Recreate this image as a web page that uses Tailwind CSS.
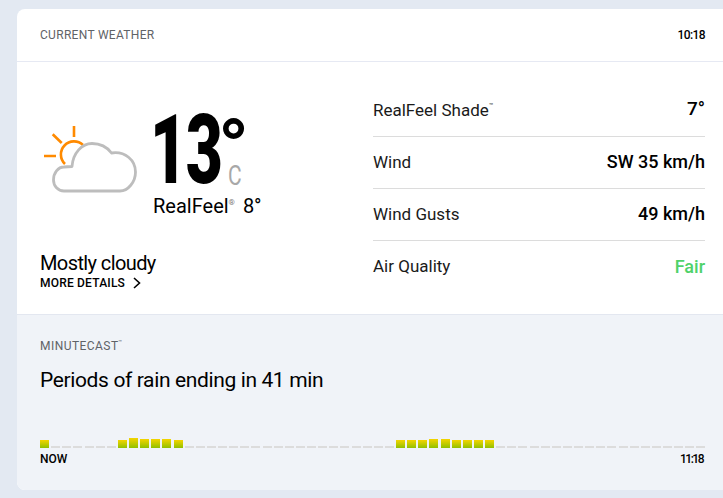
<!DOCTYPE html>
<html lang="en">
<head>
    <meta charset="UTF-8">
    <title>Current Weather</title>
    <script src="https://cdn.jsdelivr.net/npm/@tailwindcss/browser@4"></script>
</head>
<body class="bg-[#e3e9f2] h-[498px] overflow-hidden font-['Roboto',sans-serif] text-black">

    <div class="ml-[17px] mt-[9px] h-[481px] bg-white rounded-tl-lg rounded-bl-lg overflow-hidden flex flex-col">

        <!-- header -->
        <div class="h-[53px] shrink-0 border-b border-[#e6e9f3] pl-[23px] pr-[18px] flex items-center justify-between">
            <span class="text-[12px] tracking-[0.3px] text-[#5f6367]">CURRENT WEATHER</span>
            <span class="text-[12px] font-medium tracking-[-0.6px]">10:18</span>
        </div>

        <!-- current conditions -->
        <div class="h-[252px] shrink-0 pl-[23px] pr-[18px] flex justify-between">
            <div class="w-[260px] flex flex-col">
                <div class="h-[182px] flex">
                    <svg class="w-[100px] h-[76px] mt-[58px] shrink-0" viewBox="0 0 100 76" fill="none">
                        <g stroke="#ff8a00" stroke-width="2.6">
                            <path d="M4 36H16"/>
                            <path d="M34 6V17"/>
                            <path d="M12.7 14.3L21.7 23"/>
                            <path d="M25 44A12.5 12.5 0 0 1 43 25"/>
                        </g>
                        <path d="M32 46.5C33 33 42 23.5 52 23.5C60 23.5 67 27 71.5 33C85 31 95.5 40 95.5 52C95.5 62 88 71 80 71L24 71C18 71 13.5 66 13.5 60C13.5 53 18 47 24 47C27 46.5 30 46.5 32 46.5Z" fill="#fff" stroke="#bdbdbd" stroke-width="2.8" stroke-linejoin="round"/>
                    </svg>
                    <div class="ml-[10px] relative w-[130px] shrink-0">
                        <div class="mt-[53px] h-[70px] flex items-start">
                            <span class="inline-block w-[67px] origin-left scale-x-[0.66] font-black text-[97px] leading-[70px] tracking-[-2px]">13</span>
                            <span class="font-bold text-[80px] leading-[36px] mt-[15px] h-[36px] ml-[1px]">°</span>
                        </div>
                        <span class="absolute left-[78px] top-[104px] origin-left scale-x-[0.75] text-[28px] leading-[20px] text-[#a8a8a8]">C</span>
                        <div class="ml-[3px] mt-[9px] text-[20px] leading-[24px] whitespace-nowrap">RealFeel<sup class="text-[8px] text-[#777] top-[-8px]">®</sup> <span class="ml-[3px]">8°</span></div>
                    </div>
                </div>
                <div class="mt-[7px] text-[20px] leading-[24px] tracking-[-0.6px]">Mostly cloudy</div>
                <a class="flex items-center gap-[8px] text-[12px] font-medium tracking-[0.2px] leading-[16px]">
                    MORE DETAILS
                    <svg class="w-[8px] h-[12px]" viewBox="0 0 8 12" fill="none"><path d="M1 1l5.5 5L1 11" stroke="#000" stroke-width="1.6"/></svg>
                </a>
            </div>

            <div class="w-[332px] pt-[23px]">
                <div class="h-[52px] border-b border-[#dcdcdc] flex items-center justify-between">
                    <span class="text-[17px] text-[#1a1a1a]">RealFeel Shade<sup class="text-[7px] top-[-8px]">™</sup></span>
                    <span class="text-[19px] font-medium -mt-[2px]">7°</span>
                </div>
                <div class="h-[52px] border-b border-[#dcdcdc] flex items-center justify-between">
                    <span class="text-[17px] text-[#1a1a1a]">Wind</span>
                    <span class="text-[18px] font-medium -mt-[2px]">SW 35 km/h</span>
                </div>
                <div class="h-[52px] border-b border-[#dcdcdc] flex items-center justify-between">
                    <span class="text-[17px] text-[#1a1a1a]">Wind Gusts</span>
                    <span class="text-[18px] font-medium -mt-[2px]">49 km/h</span>
                </div>
                <div class="h-[52px] flex items-center justify-between">
                    <span class="text-[17px] text-[#1a1a1a]">Air Quality</span>
                    <span class="text-[18px] font-medium text-[#4fd26a] -mt-[2px]">Fair</span>
                </div>
            </div>
        </div>

        <!-- minutecast -->
        <div class="flex-1 bg-[#f0f3f8] border-t border-[#e3e7f0] pl-[23px] pr-[18px]">
            <div class="mt-[23px] text-[12px] leading-[16px] tracking-[0.45px] text-[#5f6367]">MINUTECAST<sup class="text-[6px] top-[-6px]">™</sup></div>
            <div class="mt-[12px] text-[21px] leading-[28px] tracking-[-0.37px]">Periods of rain ending in 41 min</div>
            <div id="bars" class="mt-[44px] h-[10px] flex items-end gap-[2.08px]"></div>
            <div class="mt-[3px] flex justify-between text-[12px] font-medium leading-[16px]">
                <span>NOW</span>
                <span class="tracking-[-1.5px] mr-[2px]">11:18</span>
            </div>
        </div>
    </div>

    <script>
        // minutes with rain, value is the bar height in px
        const rain = { 0: 8, 7: 8, 8: 10, 9: 9, 10: 9, 11: 9, 12: 8, 32: 8, 33: 8, 34: 8, 35: 9, 36: 9, 37: 8, 38: 8, 39: 8, 40: 8 };
        const bars = document.getElementById('bars');
        for (let i = 0; i < 60; i++) {
            const cell = document.createElement('div');
            if (rain[i]) {
                cell.className = 'flex-1 bg-linear-to-b from-[#f4d400] to-[#90c000]';
                cell.style.height = rain[i] + 'px';
            } else {
                cell.className = 'flex-1 h-[2px] bg-[#dcdcdc]';
            }
            bars.appendChild(cell);
        }
    </script>
</body>
</html>
